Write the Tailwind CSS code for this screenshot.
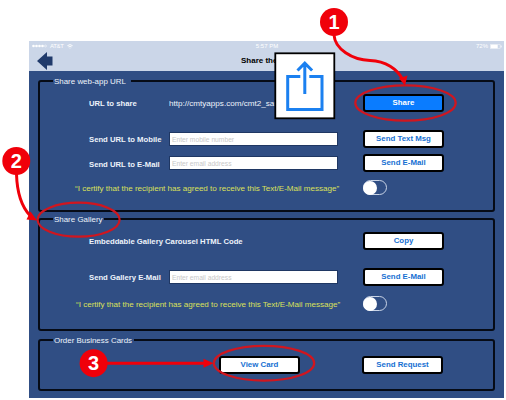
<!DOCTYPE html>
<html lang="en">
<head>
<meta charset="utf-8">
<title>Share</title>
<script src="https://cdn.jsdelivr.net/npm/@tailwindcss/browser@4"></script>
</head>
<body class="relative h-[400px] w-[506px] overflow-hidden bg-white pl-[29px] pt-[41px] font-['Liberation_Sans',Arial,sans-serif] text-[8px] leading-none text-[#eef3fb]">
  <main class="h-[357px] w-[475px] bg-[#304e84]">
    <header class="flex h-[30px] flex-col bg-[#cbd6e8]">
      <div class="grid h-[10px] grid-cols-3 items-center pl-[3px] pr-[2px] text-[6px] text-white">
        <div class="flex items-center gap-[3px]">
          <svg class="h-[4px] w-[15px]" viewBox="0 0 15 4"><g fill="#fff"><circle cx="1.5" cy="2" r="1.3"/><circle cx="4.5" cy="2" r="1.3"/><circle cx="7.5" cy="2" r="1.3"/><circle cx="10.5" cy="2" r="1.3"/></g><circle cx="13.5" cy="2" r="1" fill="none" stroke="#fff" stroke-width=".5"/></svg>
          <span class="tracking-[-0.3px]">AT&amp;T</span>
          <svg class="h-[5px] w-[6px]" viewBox="0 0 6 5" fill="none" stroke="#fff"><path d="M.4 1.7Q3-.5 5.6 1.7M1.4 2.9Q3 1.5 4.6 2.9" stroke-width=".9"/><circle cx="3" cy="4.1" r=".5" fill="#fff" stroke="none"/></svg>
        </div>
        <div class="text-center">5:57 PM</div>
        <div class="flex items-center justify-end gap-[2px]">
          <span>72%</span>
          <svg class="h-[5px] w-[12px]" viewBox="0 0 12 5"><rect x=".25" y=".25" width="10" height="4.5" rx=".8" fill="none" stroke="#fff" stroke-width=".5"/><rect x=".7" y=".7" width="7" height="3.6" fill="#fff"/><path d="M11.2 1.6v1.8" stroke="#fff" stroke-width=".8"/></svg>
        </div>
      </div>
      <div class="flex h-[20px] items-center">
        <svg class="ml-[8px] h-[18px] w-[16px]" viewBox="0 0 16 18"><path d="M0 9 10 0v4.500h5.500v9H10V18z" fill="#203a6b"/></svg>
        <h1 class="ml-[188px] text-[8px] font-bold text-black">Share the App</h1>
      </div>
    </header>

    <div class="flex flex-col pl-[9px] pt-[9px]">
      <section class="h-[132px] w-[457px] rounded-[3px] border-2 border-[#060b16]">
        <h2 class="-mt-[6px] ml-[13px] flex h-[12px] w-[78px] items-center bg-[#304e84] pl-px text-[7.95px]">Share web-app URL</h2>
        <div class="mt-[6px] flex h-[18px] items-center pl-[49px]">
          <span class="w-[80px] pt-px text-[7.7px] font-bold">URL to share</span>
          <span class="w-[194px] overflow-hidden pb-px pt-[3px] text-[8.1px]">http://cmtyapps.com/cmt2_sample</span>
          <button class="h-[18px] w-[81px] rounded-[3px] border-2 border-black bg-[#0a7cff] text-[7.85px] font-bold text-white">Share</button>
        </div>
        <div class="mt-[18px] flex h-[18px] items-center pl-[49px]">
          <span class="w-[80px] whitespace-nowrap pt-px text-[7.7px] font-bold">Send URL to Mobile</span>
          <input class="mr-[25px] h-[14px] w-[169px] border border-[#1f3763] bg-white pl-[2px] text-[6.7px] placeholder:text-[#c8c8c8]" placeholder="Enter mobile number">
          <button class="h-[18px] w-[81px] rounded-[3px] border-2 border-black bg-white text-[7.85px] font-bold text-[#1670d2]">Send Text Msg</button>
        </div>
        <div class="mt-[6px] flex h-[18px] items-center pl-[49px]">
          <span class="w-[80px] whitespace-nowrap pt-[3px] text-[7.7px] font-bold">Send URL to E-Mail</span>
          <input class="mr-[25px] h-[14px] w-[169px] border border-[#1f3763] bg-white pl-[2px] text-[6.7px] placeholder:text-[#c8c8c8]" placeholder="Enter email address">
          <button class="h-[18px] w-[81px] rounded-[3px] border-2 border-black bg-white text-[7.85px] font-bold text-[#1670d2]">Send E-Mail</button>
        </div>
        <div class="mt-[8px] flex h-[15px] items-center pl-[35px]">
          <span class="w-[288px] whitespace-nowrap pt-[3px] text-[8.05px] text-[#dbe05a]">“I certify that the recipient has agreed to receive this Text/E-Mail message”</span>
          <span class="flex h-[15px] w-[24px] items-center rounded-full border border-[#c8d3e6]"><span class="-ml-px h-[14px] w-[14px] shrink-0 rounded-full bg-white"></span></span>
        </div>
      </section>

      <section class="mt-[6px] h-[113px] w-[457px] rounded-[3px] border-2 border-[#060b16]">
        <h2 class="-mt-[6px] ml-[13px] flex h-[12px] w-[51px] items-center bg-[#304e84] pl-px text-[7.95px]">Share Gallery</h2>
        <div class="mt-[6px] flex h-[18px] items-center pl-[49px]">
          <span class="w-[274px] pt-px text-[7.7px] font-bold">Embeddable Gallery Carousel HTML Code</span>
          <button class="h-[18px] w-[81px] rounded-[3px] border-2 border-black bg-white text-[7.85px] font-bold text-[#1670d2]">Copy</button>
        </div>
        <div class="mt-[18px] flex h-[18px] items-center pl-[49px]">
          <span class="w-[80px] whitespace-nowrap pt-px text-[7.7px] font-bold">Send Gallery E-Mail</span>
          <input class="mr-[25px] h-[14px] w-[169px] border border-[#1f3763] bg-white pl-[2px] text-[6.7px] placeholder:text-[#c8c8c8]" placeholder="Enter email address">
          <button class="h-[18px] w-[81px] rounded-[3px] border-2 border-black bg-white text-[7.85px] font-bold text-[#1670d2]">Send E-Mail</button>
        </div>
        <div class="mt-[10px] flex h-[15px] items-center pl-[36px]">
          <span class="w-[287px] whitespace-nowrap pt-[3px] text-[8.05px] text-[#dbe05a]">“I certify that the recipient has agreed to receive this Text/E-Mail message”</span>
          <span class="flex h-[15px] w-[24px] items-center rounded-full border border-[#c8d3e6]"><span class="-ml-px h-[14px] w-[14px] shrink-0 rounded-full bg-white"></span></span>
        </div>
      </section>

      <section class="mt-[8px] h-[52px] w-[457px] rounded-[3px] border-2 border-[#060b16]">
        <h2 class="-mt-[6px] ml-[13px] flex h-[12px] w-[81px] items-center whitespace-nowrap bg-[#304e84] pl-px text-[7.95px]">Order Business Cards</h2>
        <div class="mt-[9px] flex h-[18px] items-center gap-[62px] pl-[179px]">
          <button class="h-[18px] w-[81px] rounded-[3px] border-2 border-black bg-white text-[7.85px] font-bold text-[#1670d2]">View Card</button>
          <button class="h-[18px] w-[81px] rounded-[3px] border-2 border-black bg-white text-[7.85px] font-bold text-[#1670d2]">Send Request</button>
        </div>
      </section>
    </div>
  </main>

  <!-- Share icon callout and numbered annotations -->
  <svg class="absolute left-0 top-0 h-[400px] w-[506px]" viewBox="0 0 506 400" fill="none">
    <rect x="275.3" y="53.3" width="59" height="65" fill="#fff" stroke="#000" stroke-width="1.8"/>
    <g stroke="#1b80f0" stroke-width="3">
      <path d="M300.300 76.500H287.700V109.500H322V76.500H309.300"/>
      <path d="M304.800 94V63.500M297.500 70.500 304.800 63.200 312.100 70.500"/>
    </g>
    <g stroke="#d0161f" stroke-width="2.2">
      <ellipse cx="405.5" cy="103" rx="50.2" ry="17.6"/>
      <ellipse cx="78.6" cy="219.7" rx="41" ry="17"/>
      <ellipse cx="264" cy="363.2" rx="50.2" ry="17.4"/>
    </g>
    <g stroke="#f0000a" stroke-width="3">
      <path d="M334 35C335 49 352 60 370 60.5C386 61 397 69 402.500 79"/>
      <path d="M16.500 174C17 192 22 207 30 215.500"/>
      <path d="M106 363.200H205"/>
    </g>
    <g fill="#f0000a">
      <path d="M399 78.500 407.500 75.500 405 85.500z"/>
      <path d="M30.500 211.500 37 220.500 26.500 219.500z"/>
      <path d="M203.500 358.700 213.500 363.200 203.500 367.700z"/>
      <circle cx="334" cy="22" r="14"/>
      <circle cx="16.300" cy="161" r="14"/>
      <circle cx="93.600" cy="363.200" r="14"/>
    </g>
    <g fill="#fff" font-family="Liberation Sans, Arial, sans-serif" font-weight="700" font-size="20" text-anchor="middle">
      <text x="334" y="29">1</text>
      <text x="16.300" y="168">2</text>
      <text x="93.600" y="370.200">3</text>
    </g>
  </svg>
</body>
</html>
